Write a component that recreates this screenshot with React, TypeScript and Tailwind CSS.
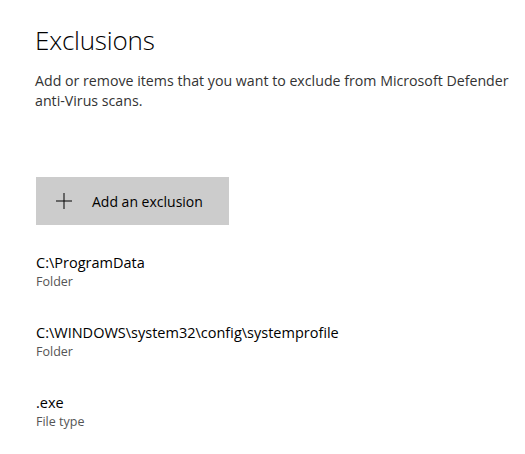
import React from 'react';

type Exclusion = {
  path: string;
  kind: string;
};

const exclusions: Exclusion[] = [
  { path: 'C:\\ProgramData', kind: 'Folder' },
  { path: 'C:\\WINDOWS\\system32\\config\\systemprofile', kind: 'Folder' },
  { path: '.exe', kind: 'File type' },
];

function PlusIcon() {
  return (
    <svg width="16" height="16" viewBox="0 0 16 16" className="shrink-0">
      <path d="M8 0V16M0 8H16" stroke="#000" strokeWidth="1" fill="none" />
    </svg>
  );
}

export default function App() {
  return (
    <div
      className="min-h-[454px] bg-white pl-[35px] pt-[22px] text-black"
      style={{ fontFamily: '"Open Sans", "Noto Sans", sans-serif' }}
    >
      <h1 className="text-[26px] font-light leading-[36px] tracking-[-0.2px]">Exclusions</h1>

      <p className="mt-[13px] w-[490px] text-[14.2px] leading-[20px] text-[#333]">
        Add or remove items that you want to exclude from Microsoft Defender anti-Virus scans.
      </p>

      <button className="mt-[66px] ml-px flex h-[48px] w-[193px] items-center bg-[#cccccc] pl-[20px] text-left">
        <PlusIcon />
        <span className="ml-[20px] text-[14px] text-black">Add an exclusion</span>
      </button>

      <ul className="mt-[28px] flex flex-col gap-[32px]">
        {exclusions.map((item) => (
          <li key={item.path} className="ml-px flex flex-col">
            <span className="text-[14.5px] leading-[20px] text-black">{item.path}</span>
            <span className="text-[12.5px] leading-[18px] text-[#555]">{item.kind}</span>
          </li>
        ))}
      </ul>
    </div>
  );
}
